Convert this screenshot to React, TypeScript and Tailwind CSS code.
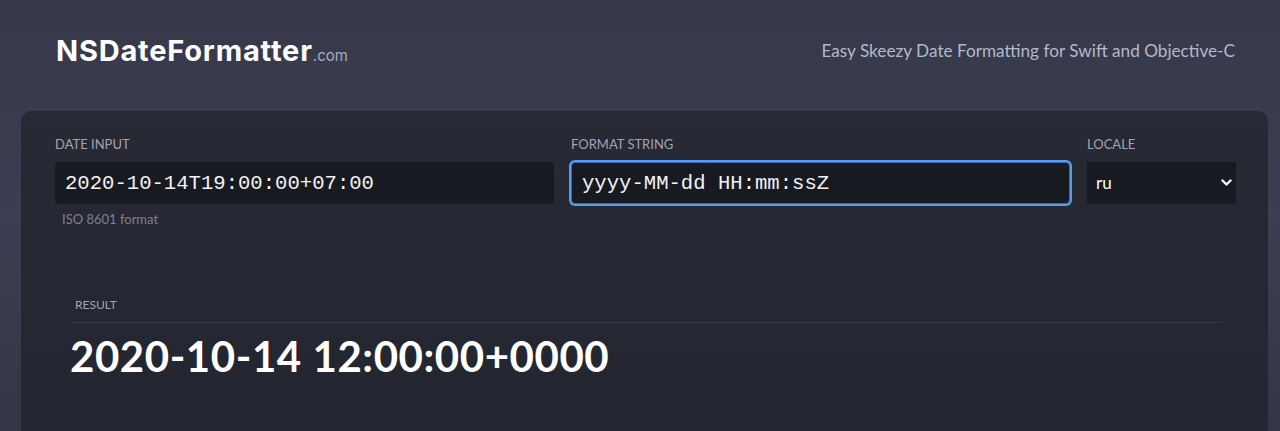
import React from "react";

export default function App() {
  return (
    <div className="h-[431px] overflow-hidden bg-gradient-to-b from-[#36384a] via-[#3c3f53] to-[#343646] font-['Lato',sans-serif]">
      <header className="flex items-start justify-between h-[111px] pl-[56px] pr-[45px] pt-[33px]">
        <div className="font-['Inter',sans-serif] text-[29px] leading-[36px] font-bold tracking-[0.8px] text-white">
          NSDateFormatter
          <span className="text-[15px] font-normal tracking-normal text-[#a9acba]">.com</span>
        </div>
        <div className="mt-[6px] text-[17.2px] leading-[24px] text-[#b5b8c6]">
          Easy Skeezy Date Formatting for Swift and Objective-C
        </div>
      </header>

      <main className="ml-[21px] mr-[12px] h-[340px] rounded-[10px] bg-gradient-to-b from-[#272935] to-[#232530] pl-[34px] pr-[32px] pt-[25px]">
        <div className="flex gap-[17px]">
          <div className="flex-1 flex flex-col">
            <label className="text-[13px] leading-[16px] uppercase text-[#a2a4b2] mb-[10px]">Date input</label>
            <input
              readOnly
              value="2020-10-14T19:00:00+07:00"
              className="h-[42px] w-full rounded-[4px] bg-[#181a22] pl-[10px] text-[20.6px] font-['Liberation_Mono',monospace] text-[#f2f2f4] outline-none"
            />
            <div className="mt-[7px] pl-[7px] text-[13px] leading-[16px] text-[#7f8190]">ISO 8601 format</div>
          </div>
          <div className="flex-1 flex flex-col">
            <label className="text-[13px] leading-[16px] uppercase text-[#a2a4b2] mb-[10px]">Format string</label>
            <input
              readOnly
              value="yyyy-MM-dd HH:mm:ssZ"
              className="h-[42px] w-full rounded-[4px] bg-[#181a22] pl-[10px] text-[20.6px] font-['Liberation_Mono',monospace] text-[#f2f2f4] outline-none border border-[#2f6cc0] shadow-[0_0_0_2px_#5d9de8]"
            />
          </div>
          <div className="w-[149px] flex flex-col">
            <label className="text-[13px] leading-[16px] uppercase text-[#a2a4b2] mb-[10px]">Locale</label>
            <div className="relative h-[42px]">
              <select
                defaultValue="ru"
                className="h-[42px] w-full appearance-none rounded-none bg-[#181a22] pl-[9px] text-[17px] text-white outline-none"
              >
                <option value="ru">ru</option>
              </select>
              <svg
                className="pointer-events-none absolute right-[4px] top-[17px]"
                width="11"
                height="8"
                viewBox="0 0 11 8"
              >
                <path d="M1.5 1.5 L5.5 5.5 L9.5 1.5" fill="none" stroke="#ffffff" strokeWidth="2.4" strokeLinecap="round" strokeLinejoin="round" />
              </svg>
            </div>
          </div>
        </div>

        <section className="mt-[70px] ml-[15px] mr-[14px]">
          <div className="pl-[5px] text-[12px] leading-[16px] uppercase text-[#a2a4b2]">Result</div>
          <div className="mt-[9px] h-px bg-[#393b48]" />
          <div className="mt-[8px] text-[42px] leading-[50px] font-bold tracking-[0.55px] text-white">2020-10-14 12:00:00+0000</div>
        </section>
      </main>
    </div>
  );
}
